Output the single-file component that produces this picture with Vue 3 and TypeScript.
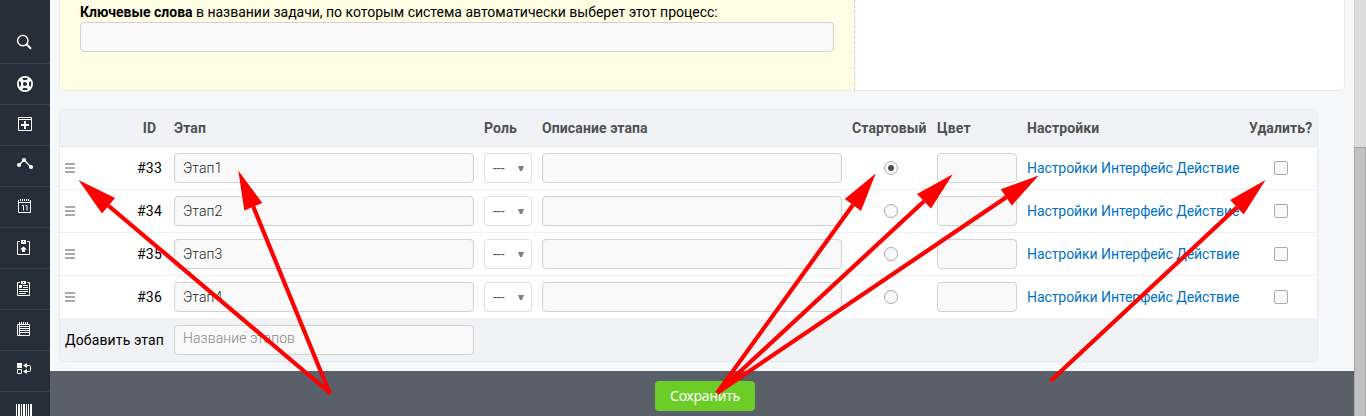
<script setup lang="ts">
import { ref } from 'vue'

interface Stage {
  id: number
  name: string
}

interface Arrow {
  tip: [number, number]
  left: [number, number]
  right: [number, number]
  tail: [number, number]
}

const stages: Stage[] = [
  { id: 33, name: 'Этап1' },
  { id: 34, name: 'Этап2' },
  { id: 35, name: 'Этап3' },
  { id: 36, name: 'Этап4' },
]
const startId = ref(33)

const arrows: Arrow[] = [
  { tip: [78.5, 180], left: [115, 198], right: [102, 213.5], tail: [330, 393] },
  { tip: [238.3, 170.5], left: [262.3, 203], right: [244.3, 210.5], tail: [330, 394] },
  { tip: [875.7, 173.5], left: [844.8, 199], right: [861, 211], tail: [717, 393] },
  { tip: [952.8, 174.3], left: [917, 194], right: [931, 208.5], tail: [717, 393] },
  { tip: [1038.7, 175.5], left: [1000.7, 189.2], right: [1011.8, 205.5], tail: [717, 393] },
  { tip: [1265.5, 180], left: [1230.2, 200], right: [1243.7, 214.5], tail: [1050.5, 381] },
]

const head = (a: Arrow): string => [a.tip, a.left, a.right].map((p) => p.join(',')).join(' ')
</script>

<template>
  <div class="app">
    <nav class="side">
      <a class="cell"><svg viewBox="0 0 50 41"><circle cx="22.8" cy="17.6" r="5.2" class="l" stroke-width="1.4" /><path d="M26.5 21.3L31 25.8" class="l" stroke-width="2" /></svg></a>
      <a class="cell"><svg viewBox="0 0 50 41"><circle cx="25" cy="20" r="7.1" class="l" stroke-width="1.8" /><circle cx="25" cy="20" r="3.1" class="l" stroke-width="2" /><path d="M20 15l3 3M30 15l-3 3M20 25l3-3M30 25l-3-3" class="l" stroke-width="3.4" /></svg></a>
      <a class="cell"><svg viewBox="0 0 50 41"><path d="M18.5 12.5h13v13h-13zM18 14.5h14" class="l" /><path d="M25 16v8M21 20h8" class="l" stroke-width="2" /></svg></a>
      <a class="cell"><svg viewBox="0 0 50 41"><path d="M19 19L24 14L31 21" class="l" stroke-width="1.3" /><g class="f"><circle cx="19" cy="19" r="2.1" /><circle cx="24" cy="14" r="2.1" /><circle cx="31" cy="21" r="2.1" /></g></svg></a>
      <a class="cell"><svg viewBox="0 0 50 41"><path d="M18.5 13v12.5h12V13M18 15.5h13" class="l" /><path d="M20 13h10" class="l" stroke-width="2" stroke-dasharray="1 1" /><path d="M22 18.5h1.5v5M25.5 18.5h1.5v5" class="l" /></svg></a>
      <a class="cell"><svg viewBox="0 0 50 41"><path d="M20 13.5h-2.5v13h12v-13H27" class="l" /><path d="M21 12h5v4h-5zM23.5 18.5l3.5 3h-2v2.500h-3v-2.500h-2z" class="f" /><path d="M23 13h1v1h-1z" class="d" /></svg></a>
      <a class="cell"><svg viewBox="0 0 50 41"><path d="M20 13.5h-2.5v13h12v-13H27" class="l" /><path d="M21 12h5v3h-5zM19 16h3v3h-3z" class="f" /><path d="M23 13h1v1h-1z" class="d" /><path d="M23 16.500h5M23 18.500h5M19 20.500h9M19 22.500h9M19 24.500h7" class="l" /></svg></a>
      <a class="cell"><svg viewBox="0 0 50 41"><path d="M17.5 14.500h12v11h-12zM19.500 15v11M19 16.500h10M19 18.500h10M19 20.500h10M19 22.500h10" class="l" /><path d="M19 13h9" class="l" stroke-width="2" stroke-dasharray="1 1" /></svg></a>
      <a class="cell"><svg viewBox="0 0 50 41"><path d="M17 12h5v5h-5z" class="f" /><path d="M17.500 18.500h4v4h-4zM26 14.500h3.500q1 0 1 1v4q0 1-1 1H26" class="l" /><path d="M23 14.500l4-2.500v5zM23 20.500l4-2.500v5z" class="f" /></svg></a>
      <a class="cell"><svg viewBox="0 0 50 41"><path d="M16 12h1v14h-1zM18 12h2v14h-2zM21 12h1v14h-1zM23 12h2v14h-2zM26 12h1v14h-1zM28 12h1v14h-1zM30 12h2v14h-2z" class="f" /></svg></a>
    </nav>

    <main class="main">
      <section class="panel">
        <div class="keywords">
          <label><b>Ключевые слова</b> в названии задачи, по которым система автоматически выберет этот процесс:</label>
          <div class="field"></div>
        </div>
      </section>

      <section class="table">
        <div class="row header">
          <span></span>
          <span class="id">ID</span>
          <span>Этап</span>
          <span>Роль</span>
          <span>Описание этапа</span>
          <span>Стартовый</span>
          <span>Цвет</span>
          <span>Настройки</span>
          <span>Удалить?</span>
        </div>
        <div v-for="s in stages" :key="s.id" class="row stage">
          <span class="grip"><i></i><i></i><i></i></span>
          <span class="id">#{{ s.id }}</span>
          <div class="field">{{ s.name }}</div>
          <div class="select"><span>---</span><svg width="6" height="5" viewBox="0 0 6 5"><path d="M0 0h6L4 5H2z" /></svg></div>
          <div class="field"></div>
          <span class="radio" :class="{ on: s.id === startId }" @click="startId = s.id"></span>
          <div class="field color"></div>
          <span class="links"><a>Настройки</a> <a>Интерфейс</a> <a>Действие</a></span>
          <span class="check"></span>
        </div>
        <div class="row add">
          <span class="add-label">Добавить этап</span>
          <div class="field hint">Название этапов</div>
        </div>
      </section>

      <footer class="bar"><button class="save">Сохранить</button></footer>
    </main>

    <div class="scroll"><div class="thumb"></div></div>

    <svg class="arrows" width="1366" height="416" viewBox="0 0 1366 416">
      <g v-for="(a, i) in arrows" :key="i">
        <line :x1="a.tail[0]" :y1="a.tail[1]" :x2="(a.left[0] + a.right[0]) / 2" :y2="(a.left[1] + a.right[1]) / 2" />
        <polygon :points="head(a)" />
      </g>
    </svg>
  </div>
</template>

<style>
body { margin: 0; overflow: hidden; }
</style>

<style scoped>
* { box-sizing: border-box; }
.app {
  position: relative;
  display: flex;
  width: 1366px;
  height: 416px;
  overflow: hidden;
  background: #f5f7f9;
  color: #000;
  font: 14px/20px Roboto, sans-serif;
}
.side { width: 50px; height: 416px; padding-top: 23px; overflow: hidden; background: #262f39; flex: none; }
.cell { display: block; height: 41px; border-bottom: 1px solid #36404a; }
.cell svg { display: block; width: 50px; height: 41px; }
.l { fill: none; stroke: #fff; }
.f { fill: #fff; }
.d { fill: #262f39; }
.main { display: flex; flex-direction: column; width: 1304px; flex: none; }
.panel {
  width: 1284px;
  height: 90px;
  margin-left: 10px;
  background: #fff;
  border-radius: 0 0 5px 5px;
  box-shadow: 0 0 1px 1px #e9ebee;
  flex: none;
}
.keywords {
  width: 795px;
  height: 90px;
  padding: 2px 20px 0;
  background: #fffde3;
  border-right: 1px dashed #ccc;
  border-radius: 0 0 0 2px;
}
.keywords label { display: block; white-space: nowrap; letter-spacing: -0.015px; }
.field {
  height: 30px;
  padding: 0 8px;
  border: 1px solid #d2d2d2;
  border-radius: 4px;
  background: #f9f9f9;
  color: #222;
  font-weight: 300;
  line-height: 28px;
  letter-spacing: 0.08px;
}
.keywords .field { width: 754px; }
.table {
  width: 1257px;
  height: 251px;
  margin: 20px 0 0 10px;
  background: #fff;
  border-radius: 5px;
  box-shadow: 0 0 1px 1px #e8eaed;
  flex: none;
}
.row {
  display: grid;
  grid-template-columns: 74px 40px 310px 58px 310px 85px 90px 222px 68px;
  align-items: center;
  white-space: nowrap;
}
.row > .field { width: 300px; }
.row > .color { width: 80px; }
.header {
  height: 37px;
  background: #f0f2f6;
  border-bottom: 1px solid #e3e5e9;
  border-radius: 5px 5px 0 0;
  color: #505050;
  font-weight: 700;
  letter-spacing: 0.12px;
}
.stage { height: 43px; border-bottom: 1px solid #f0f1f2; }
.stage:nth-child(5) { height: 42px; border-bottom: 0; }
.id { width: 31px; display: flex; justify-content: center; }
.stage .id { letter-spacing: 0.2px; }
.grip { display: flex; flex-direction: column; gap: 2px; width: 10px; margin-left: 5px; }
.grip i { height: 2px; background: #aaa; }
.select {
  display: flex;
  align-items: center;
  justify-content: space-between;
  width: 48px;
  height: 30px;
  padding: 0 7px 0 8px;
  border: 1px solid #dedede;
  border-radius: 4px;
  background: #fff;
  color: #555;
}
.select path { fill: #808080; }
.radio, .check { width: 14px; height: 14px; border: 1px solid #aaa; background: #f9f9f9; }
.radio { display: flex; align-items: center; justify-content: center; margin-left: 32px; border-radius: 50%; }
.radio.on::after { content: ''; width: 6px; height: 6px; border-radius: 50%; background: #505050; }
.check { margin-left: 25px; border-radius: 2px; }
.links { letter-spacing: -0.075px; }
.links a { color: #0072c6; }
.add { height: 43px; background: #f0f2f6; border-radius: 0 0 5px 5px; }
.add-label { grid-column: 1 / 3; padding-left: 5px; letter-spacing: 0.14px; }
.hint { color: #888; line-height: 25px; }
.bar { display: flex; width: 1304px; height: 45px; margin-top: 10px; padding-top: 10px; background: #59606a; flex: none; }
.save {
  width: 100px;
  height: 30px;
  margin-left: 605px;
  padding: 0;
  border: 0;
  border-radius: 4px;
  background: #6ccd27;
  color: #fff;
  font: 14px/30px 'Noto Sans', sans-serif;
  letter-spacing: -0.22px;
}
.scroll { width: 12px; height: 416px; padding-top: 147px; background: #dcdcdc; border-left: 1px solid #d0d0d0; flex: none; }
.thumb { height: 269px; margin-left: -1px; background: #c1c1c1; border: 1px solid #a4a4a4; border-bottom: 0; }
.arrows { position: absolute; left: 0; top: 0; pointer-events: none; }
.arrows line { stroke: #f00; stroke-width: 4.2; }
.arrows polygon { fill: #f00; }
</style>
